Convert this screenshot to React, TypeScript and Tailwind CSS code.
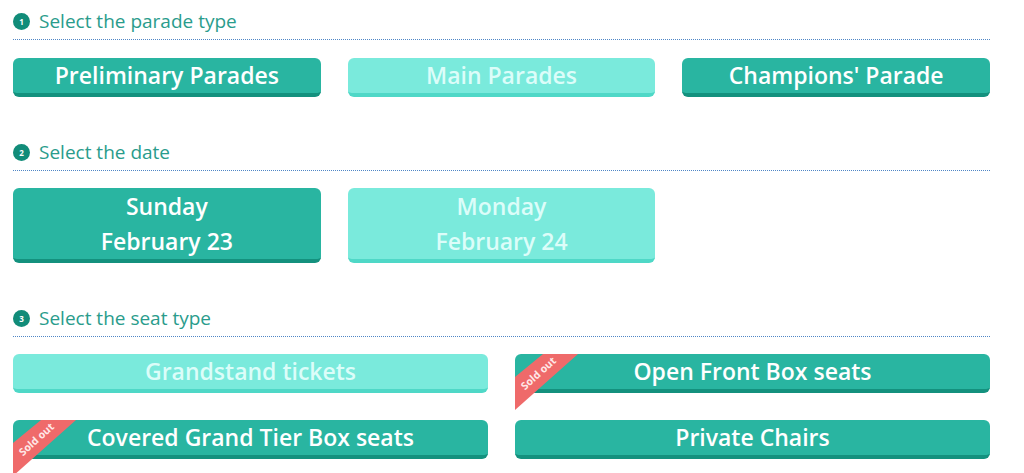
import React from 'react';

interface StepHeadingProps {
  step: number;
  title: string;
}

const StepHeading: React.FC<StepHeadingProps> = ({ step, title }) => (
  <div className="pt-[12px] pb-[8px] border-b border-dotted border-[#4f86c6]">
    <div className="flex items-center h-[19px]">
      <span className="w-[17px] h-[17px] rounded-full bg-[#118c79] text-white text-[8px] font-bold flex items-center justify-center leading-none">
        {step}
      </span>
      <span className="ml-[9px] text-[19px] text-[#2a9c8c] leading-none">{title}</span>
    </div>
  </div>
);

interface OptionButtonProps {
  lines: string[];
  active?: boolean;
  soldOut?: boolean;
  tall?: boolean;
}

const SoldOutRibbon = () => (
  <svg
    className="absolute left-0 top-0 z-10 overflow-visible"
    width="63"
    height="57"
    viewBox="0 0 63 57"
  >
    <polygon points="28,0 63,0 0,56 0,23" fill="#ef6a6a" />
    <text
      x="24"
      y="20"
      fill="#ffe9e9"
      fontSize="10.5"
      fontWeight="700"
      fontFamily="'Open Sans', sans-serif"
      textAnchor="middle"
      dominantBaseline="middle"
      transform="rotate(-42 24 20)"
    >
      Sold out
    </text>
  </svg>
);

const OptionButton: React.FC<OptionButtonProps> = ({ lines, active = true, soldOut, tall }) => (
  <button
    className={
      'relative w-full rounded-[6px] border-b-[4px] flex flex-col items-center justify-center font-semibold text-[23px] leading-[35px] ' +
      (tall ? 'h-[75px] ' : 'h-[39px] ') +
      (active
        ? 'bg-[#29b5a1] border-[#14917e] text-white'
        : 'bg-[#7aeadc] border-[#4fd8c7] text-[#dcfdf9]')
    }
  >
    {soldOut && <SoldOutRibbon />}
    {lines.map((l) => (
      <span key={l}>{l}</span>
    ))}
  </button>
);

export default function App() {
  return (
    <div className="w-[1024px] h-[473px] overflow-hidden bg-white font-['Open_Sans',sans-serif]">
      <div className="ml-[13px] w-[977px]">
        <StepHeading step={1} title="Select the parade type" />
        <div className="mt-[18px] grid grid-cols-3 gap-[27px]">
          <OptionButton lines={['Preliminary Parades']} />
          <OptionButton lines={['Main Parades']} active={false} />
          <OptionButton lines={["Champions' Parade"]} />
        </div>

        <div className="mt-[34px]">
          <StepHeading step={2} title="Select the date" />
          <div className="mt-[17px] grid grid-cols-3 gap-[27px]">
            <OptionButton lines={['Sunday', 'February 23']} tall />
            <OptionButton lines={['Monday', 'February 24']} tall active={false} />
          </div>
        </div>

        <div className="mt-[34px]">
          <StepHeading step={3} title="Select the seat type" />
          <div className="mt-[17px] grid grid-cols-2 gap-x-[27px] gap-y-[27px]">
            <OptionButton lines={['Grandstand tickets']} active={false} />
            <OptionButton lines={['Open Front Box seats']} soldOut />
            <OptionButton lines={['Covered Grand Tier Box seats']} soldOut />
            <OptionButton lines={['Private Chairs']} />
          </div>
        </div>
      </div>
    </div>
  );
}
